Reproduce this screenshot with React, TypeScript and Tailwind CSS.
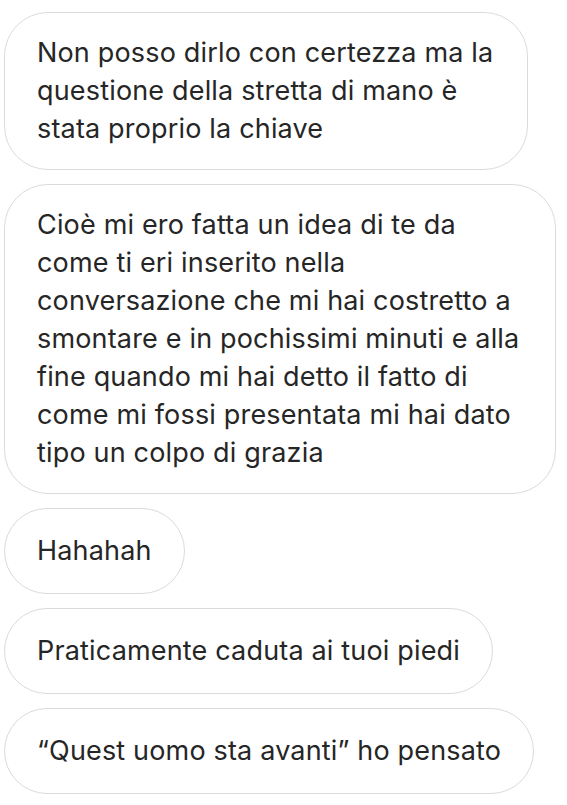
const messages: { lines: string[]; width?: string }[] = [
  {
    lines: [
      "Non posso dirlo con certezza ma la",
      "questione della stretta di mano è",
      "stata proprio la chiave",
    ],
    width: "w-[524px]",
  },
  {
    lines: [
      "Cioè mi ero fatta un idea di te da",
      "come ti eri inserito nella",
      "conversazione che mi hai costretto a",
      "smontare e in pochissimi minuti e alla",
      "fine quando mi hai detto il fatto di",
      "come mi fossi presentata mi hai dato",
      "tipo un colpo di grazia",
    ],
    width: "w-[552px]",
  },
  { lines: ["Hahahah"] },
  { lines: ["Praticamente caduta ai tuoi piedi"] },
  { lines: ["“Quest uomo sta avanti” ho pensato"] },
];

function Bubble({ lines, width }: { lines: string[]; width?: string }) {
  if (lines.length === 1) {
    return (
      <div className="w-fit whitespace-nowrap rounded-full border border-[#dbdbdb] bg-white px-[32px] py-[23px] text-[27px] leading-[38px] tracking-[0.17px] text-[#262626]">
        {lines[0]}
      </div>
    );
  }
  return (
    <div
      className={`${width} rounded-[44px] border border-[#dbdbdb] bg-white py-[21px] pl-[32px] text-[27px] leading-[38px] tracking-[0.17px] text-[#262626]`}
    >
      {lines.map((line) => (
        <div key={line} className="whitespace-nowrap">
          {line}
        </div>
      ))}
    </div>
  );
}

export default function App() {
  return (
    <div
      className="min-h-[805px] w-[567px] bg-white pl-[4px] pt-[12px]"
      style={{ fontFamily: "Inter, 'Noto Sans', sans-serif" }}
    >
      <div className="flex flex-col items-start gap-[14px]">
        {messages.map((m, i) => (
          <Bubble key={i} lines={m.lines} width={m.width} />
        ))}
      </div>
    </div>
  );
}
